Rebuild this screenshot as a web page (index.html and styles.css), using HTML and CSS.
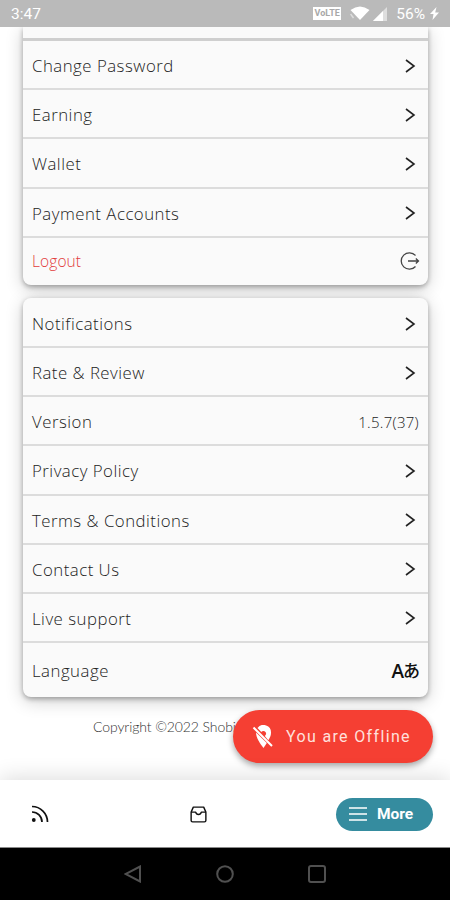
FILE: index.html
```html
<!DOCTYPE html>
<html lang="en">
<head>
<meta charset="UTF-8" />
<meta name="viewport" content="width=device-width, initial-scale=1" />
<title>More</title>
<link rel="stylesheet" href="styles.css">
</head>
<body>

<!-- Shared icons -->
<svg class="sprite" aria-hidden="true">
  <symbol id="chevron" viewBox="0 0 12 16">
    <path d="M2 2l8 6-8 6" fill="none" stroke="#222" stroke-width="1.6" />
  </symbol>
</svg>

<div class="phone">
  <header class="status-bar">
    <span class="clock">3:47</span>
    <div class="status-icons">
      <span class="volte">VoLTE</span>
      <svg class="wifi" width="20" height="15" viewBox="0 0 20 15">
        <path d="M0.5 4Q10-3 19.5 4L10 14z" fill="#fff" />
        <path d="M0.5 8l3 4" stroke="#ddd" stroke-width="1.5" />
      </svg>
      <svg class="signal" width="14" height="14" viewBox="0 0 14 14">
        <path d="M14 0v14H0z" fill="#dedede" />
        <path d="M10 4v10H0z" fill="#fff" />
      </svg>
      <span class="percent">56%</span>
      <svg class="bolt" width="9" height="13" viewBox="0 0 9 13">
        <path d="M6.5 0L0 7h3.5L2.5 13 9 5.5H5.2z" fill="#fff" />
      </svg>
    </div>
  </header>

  <main class="screen">
    <div class="card account">
      <div class="row stub"></div>
      <div class="row"><span>Change Password</span><svg class="chevron"><use href="#chevron" /></svg></div>
      <div class="row"><span>Earning</span><svg class="chevron"><use href="#chevron" /></svg></div>
      <div class="row"><span>Wallet</span><svg class="chevron"><use href="#chevron" /></svg></div>
      <div class="row"><span>Payment Accounts</span><svg class="chevron"><use href="#chevron" /></svg></div>
      <div class="row logout">
        <span>Logout</span>
        <svg width="20" height="20" viewBox="0 0 20 20" fill="none" stroke="#444" stroke-width="1.3">
          <path d="M15.5 4.5A8.2 8.2 0 1 0 15.5 15.5" />
          <path d="M8 10h10.5M15.8 7.5l2.7 2.5-2.7 2.5" />
        </svg>
      </div>
    </div>

    <div class="card general">
      <div class="row"><span>Notifications</span><svg class="chevron"><use href="#chevron" /></svg></div>
      <div class="row"><span>Rate &amp; Review</span><svg class="chevron"><use href="#chevron" /></svg></div>
      <div class="row"><span>Version</span><span class="version">1.5.7(37)</span></div>
      <div class="row"><span>Privacy Policy</span><svg class="chevron"><use href="#chevron" /></svg></div>
      <div class="row"><span>Terms &amp; Conditions</span><svg class="chevron"><use href="#chevron" /></svg></div>
      <div class="row"><span>Contact Us</span><svg class="chevron"><use href="#chevron" /></svg></div>
      <div class="row"><span>Live support</span><svg class="chevron"><use href="#chevron" /></svg></div>
      <div class="row language"><span>Language</span><span class="lang-icon">A<b>あ</b></span></div>
    </div>

    <p class="copyright">Copyright ©2022 Shobi</p>

    <div class="offline">
      <svg width="22" height="24" viewBox="0 0 22 24">
        <path d="M5.5 3A7.5 7.5 0 0 1 19 8c0 2.6-1.2 5-2.7 7.2L12.8 11A2.7 2.7 0 1 0 9.3 7z" fill="#fff" />
        <path d="M4 7.5l10.8 10.5-3.3 5C8 18.8 4 12.5 4 7.5z" fill="#fff" />
        <path d="M1.5 2.5L20 21" stroke="#fff" stroke-width="2" />
      </svg>
      <span>You are Offline</span>
    </div>
  </main>

  <nav class="tabs">
    <svg class="feed" width="18" height="18" viewBox="0 0 18 18" fill="none" stroke="#111" stroke-width="1.7">
      <path d="M1 1.5A15.5 15.5 0 0 1 16.5 17M1 7A10 10 0 0 1 11 17" />
      <circle cx="2.8" cy="15" r="1.9" fill="#111" stroke="none" />
    </svg>
    <svg class="inbox" width="17" height="17" viewBox="0 0 18 18" fill="none" stroke="#111" stroke-width="1.5" stroke-linejoin="round">
      <path d="M1.2 6.5L3.5 1.2h11l2.3 5.3v8.8q0 1.5-1.5 1.5H2.7q-1.5 0-1.5-1.5z" />
      <path d="M1.2 6.5h4.8q.6 2.5 3 2.5t3-2.5h4.8" />
    </svg>
    <div class="more">
      <svg width="18" height="14" viewBox="0 0 18 14" stroke="#fff" stroke-width="1.5">
        <path d="M0 1h18M0 7h18M0 13h18" />
      </svg>
      <span>More</span>
    </div>
  </nav>

  <footer class="android-bar">
    <svg width="18" height="18" viewBox="0 0 18 18"><path d="M16 1.5v15L1.5 9z" /></svg>
    <svg width="18" height="18" viewBox="0 0 18 18"><circle cx="9" cy="9" r="7.8" /></svg>
    <svg width="18" height="18" viewBox="0 0 18 18"><rect x="1" y="1" width="16" height="16" rx="2" /></svg>
  </footer>
</div>

</body>
</html>
```
FILE: styles.css
```css
* {
  box-sizing: border-box;
}
body {
  margin: 0;
  background: #fff;
  font-family: "Open Sans", "Noto Sans", "Noto Sans CJK JP", sans-serif;
}
svg {
  flex: none;
}
.sprite {
  position: absolute;
  width: 0;
  height: 0;
}
.phone {
  width: 450px;
  height: 900px;
  display: flex;
  flex-direction: column;
  overflow: hidden;
}

/* Status bar */
.status-bar {
  height: 27px;
  flex: none;
  background: #bababa;
  color: #fff;
  display: flex;
  align-items: center;
  justify-content: space-between;
  padding: 0 11px;
  font-family: Roboto, sans-serif;
  font-size: 15.5px;
}
.status-icons {
  display: flex;
  align-items: center;
}
.volte {
  width: 28px;
  height: 13px;
  background: #fff;
  color: #a8a8a8;
  font-size: 9px;
  font-weight: 700;
  line-height: 13px;
  text-align: center;
  margin-right: 1px;
}
.wifi {
  margin-left: 8px;
}
.signal {
  margin-left: 3px;
}
.percent {
  margin-left: 9px;
}
.bolt {
  margin-left: 5px;
}

/* Scrolled page */
.screen {
  flex: 1;
  position: relative;
  overflow: hidden;
  padding: 0 22px 0 23px;
}
.card {
  background: #fafafa;
  border-radius: 8px;
  box-shadow: 0 2px 5px rgba(0, 0, 0, 0.3), 0 4px 18px rgba(0, 0, 0, 0.2);
}
.account {
  border-radius: 0 0 8px 8px;
}
.general {
  margin-top: 13px;
}
.row {
  height: 49.2px;
  display: flex;
  align-items: center;
  justify-content: space-between;
  padding: 2px 9px 0 9px;
  border-bottom: 2px solid #dcdcdc;
  font-size: 16.8px;
  font-weight: 300;
  letter-spacing: 0.5px;
  color: #222;
}
.row.stub {
  height: 14px;
  border-bottom: 3px solid #cfcfcf;
}
.row .chevron {
  width: 12px;
  height: 16px;
  margin-right: 3px;
}
.row.logout {
  height: 47.2px;
  border-bottom: none;
  color: #e23c3c;
  font-size: 15.5px;
  letter-spacing: 0.1px;
  padding: 0 8px 0 9px;
}
.general .row:first-child {
  height: 50px;
  padding-top: 4px;
}
.row.language {
  height: 53.8px;
  border-bottom: none;
}
.version {
  font-size: 15px;
  letter-spacing: 0.3px;
}
.lang-icon {
  display: flex;
  align-items: baseline;
  font-size: 19px;
  font-weight: 600;
  letter-spacing: 0;
  color: #111;
  line-height: 24px;
}
.lang-icon b {
  margin: 0 -1px 2px -1px;
  align-self: center;
  font-family: "Noto Sans CJK JP", sans-serif;
  font-size: 17px;
  font-weight: 500;
  line-height: 20px;
}
.copyright {
  margin: 20px 0 0 70px;
  font-family: Lato, sans-serif;
  font-size: 14px;
  font-weight: 300;
  line-height: 20px;
  letter-spacing: -0.1px;
  color: #333;
}

/* Floating status button */
.offline {
  position: absolute;
  left: 233px;
  top: 683px;
  width: 200px;
  height: 53px;
  border-radius: 27px;
  background: #f53f33;
  box-shadow: 0 3px 6px rgba(0, 0, 0, 0.35);
  display: flex;
  align-items: center;
  padding-left: 19px;
  gap: 12px;
  color: #ffe0dc;
  font-family: Roboto, sans-serif;
  font-size: 16px;
  letter-spacing: 1.35px;
  white-space: nowrap;
}

/* Bottom navigation */
.tabs {
  height: 68px;
  flex: none;
  position: relative;
  background: #fff;
  border-bottom: 1px solid #8a8a8a;
  box-shadow: 0 -2px 22px rgba(0, 0, 0, 0.14);
  display: flex;
  align-items: center;
  padding: 1px 17px 0 31px;
}
.inbox {
  margin-left: 141px;
}
.more {
  width: 97px;
  height: 33px;
  margin-left: auto;
  border-radius: 17px;
  background: #358c9f;
  color: #fff;
  display: flex;
  align-items: center;
  padding-left: 13px;
  gap: 10px;
  font-family: Roboto, sans-serif;
  font-size: 15.5px;
  font-weight: 700;
}

/* Android buttons */
.android-bar {
  height: 52px;
  flex: none;
  background: #000;
  display: flex;
  align-items: center;
  justify-content: center;
  gap: 74px;
}
.android-bar svg {
  fill: none;
  stroke: #505050;
  stroke-width: 2;
}
```
